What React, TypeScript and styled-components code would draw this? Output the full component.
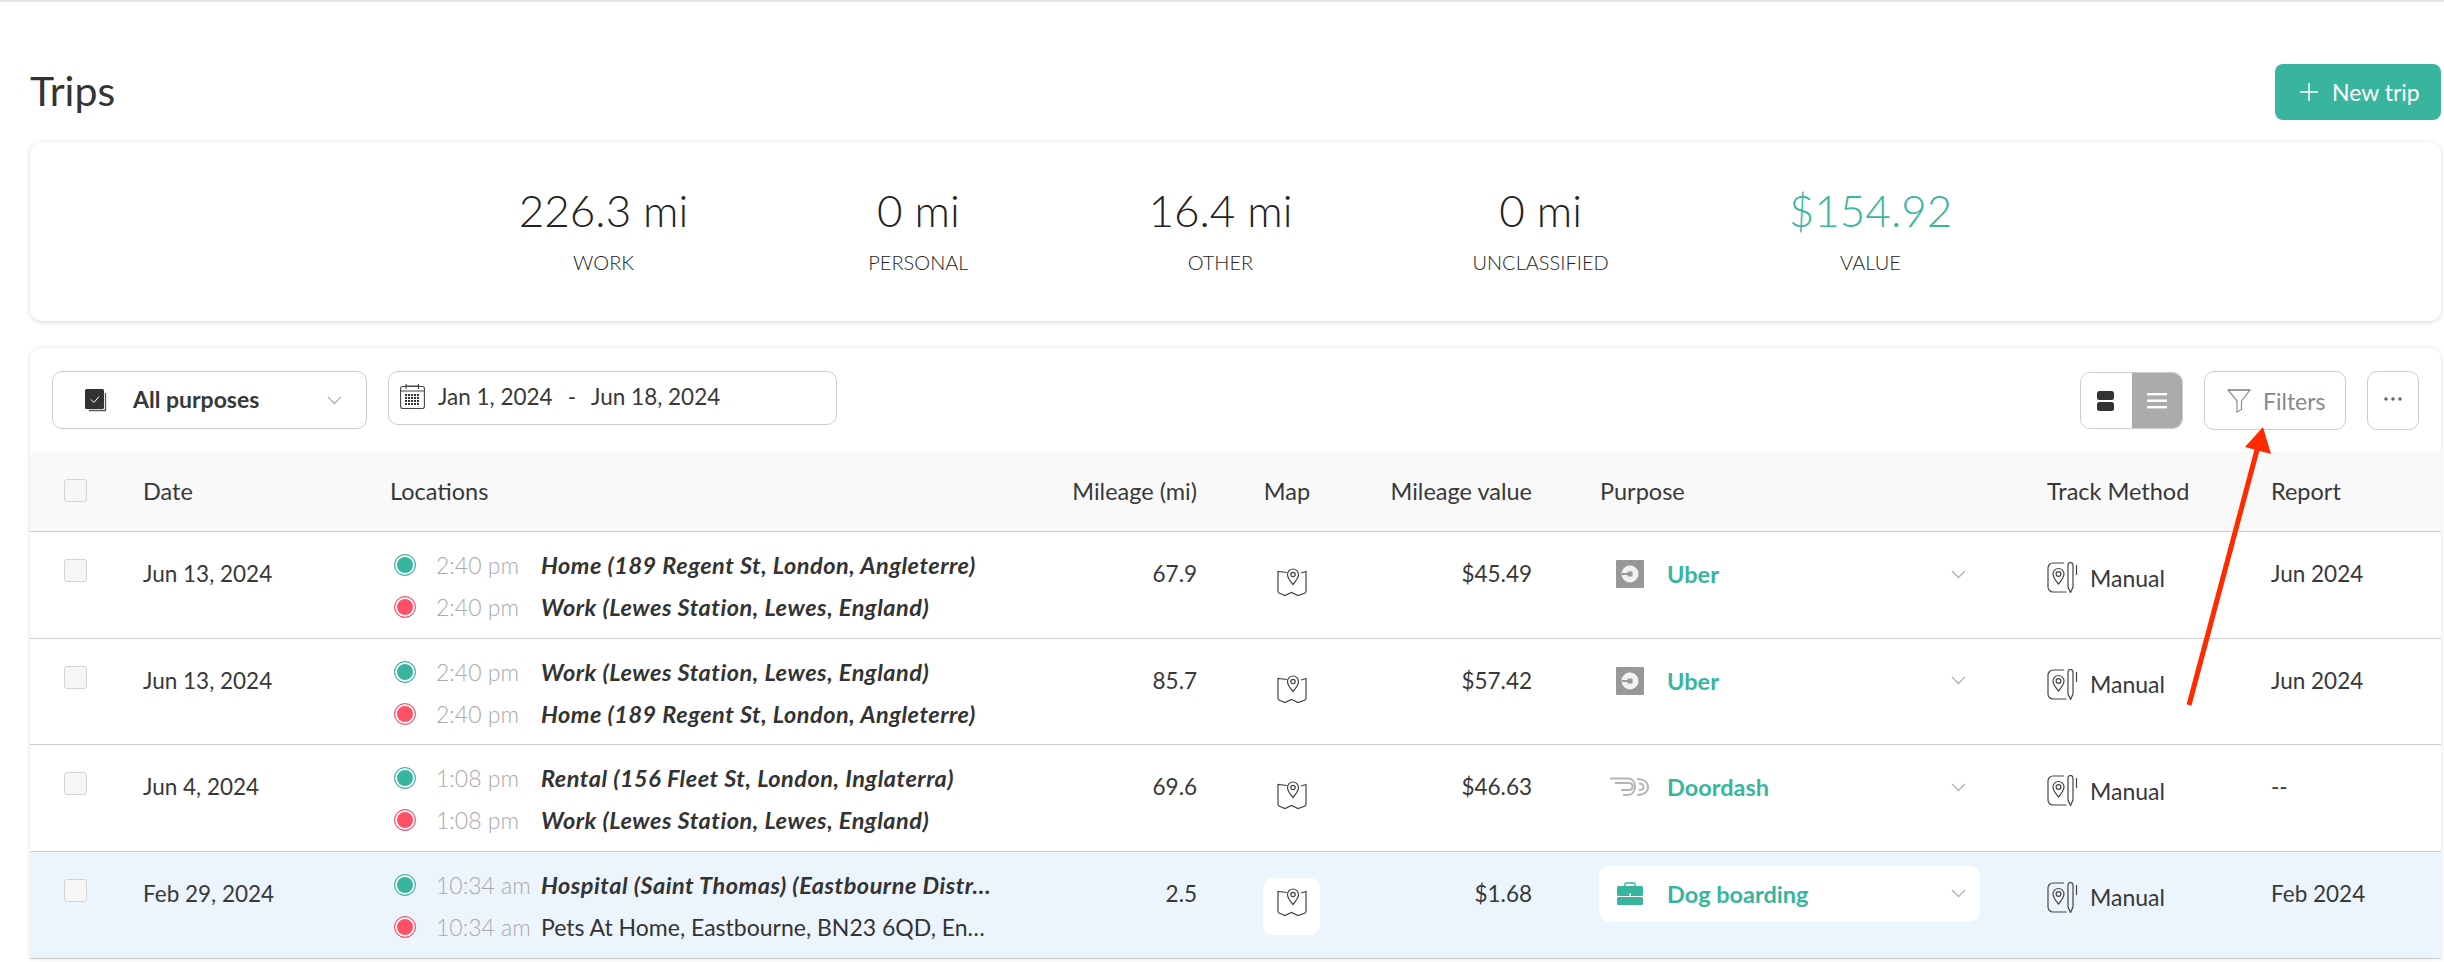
import styled, { createGlobalStyle } from "styled-components";

type PurposeKind = "uber" | "doordash" | "work";

interface Trip {
  date: string;
  time: string;
  from: string;
  to: string;
  toPlain?: boolean;
  miles: string;
  value: string;
  purpose: string;
  kind: PurposeKind;
  report: string;
  active?: boolean;
}

const HOME = "Home (189 Regent St, London, Angleterre)";
const WORK = "Work (Lewes Station, Lewes, England)";

const trips: Trip[] = [
  { date: "Jun 13, 2024", time: "2:40 pm", from: HOME, to: WORK, miles: "67.9", value: "$45.49", purpose: "Uber", kind: "uber", report: "Jun 2024" },
  { date: "Jun 13, 2024", time: "2:40 pm", from: WORK, to: HOME, miles: "85.7", value: "$57.42", purpose: "Uber", kind: "uber", report: "Jun 2024" },
  { date: "Jun 4, 2024", time: "1:08 pm", from: "Rental (156 Fleet St, London, Inglaterra)", to: WORK, miles: "69.6", value: "$46.63", purpose: "Doordash", kind: "doordash", report: "--" },
  {
    date: "Feb 29, 2024",
    time: "10:34 am",
    from: "Hospital (Saint Thomas) (Eastbourne Distr…",
    to: "Pets At Home, Eastbourne, BN23 6QD, En…",
    toPlain: true,
    miles: "2.5",
    value: "$1.68",
    purpose: "Dog boarding",
    kind: "work",
    report: "Feb 2024",
    active: true,
  },
];

const stats = [
  { value: "226.3 mi", label: "WORK" },
  { value: "0 mi", label: "PERSONAL" },
  { value: "16.4 mi", label: "OTHER" },
  { value: "0 mi", label: "UNCLASSIFIED" },
  { value: "$154.92", label: "VALUE", money: true },
];

const Chevron = () => (
  <svg width="15" height="9" viewBox="0 0 15 9" fill="none">
    <path d="M1 1l6.5 6.5L14 1" stroke="#b0b0b0" strokeWidth="1.3" />
  </svg>
);

const PurposeIcon = ({ kind }: { kind: PurposeKind }) => {
  if (kind === "uber") {
    return (
      <svg width="28" height="28" viewBox="0 0 28 28">
        <rect width="28" height="28" rx="1" fill="#979797" />
        <path d="M0 6L8 14 0 22M28 6L20 14 28 22M6 0l8 6 8-6M6 28l8-6 8 6" stroke="#a6a6a6" strokeWidth=".7" fill="none" />
        <circle cx="14" cy="14" r="8.5" fill="#f2f2f2" />
        <rect x="6" y="13" width="7" height="2" fill="#979797" />
        <rect x="11.5" y="11.5" width="5" height="5" fill="#979797" />
      </svg>
    );
  }
  if (kind === "doordash") {
    return (
      <svg width="40" height="20" viewBox="0 0 40 20" fill="none" stroke="#b4b4b4" strokeWidth="2">
        <path d="M0 1.5h18c4 0 7 3 7 8s-3 8.500-7 8.500h-5" />
        <path d="M5 6h14c2 0 3.500 1.500 3.500 3.500S21 13 19 13H11" />
        <path d="M27 2c5 0 11 2 11 8s-6 8-11 8" />
        <path d="M29 6.500c3 0 4.500 1.500 4.500 3.500s-1.500 3-4.500 3" />
      </svg>
    );
  }
  return (
    <svg width="26" height="23" viewBox="0 0 26 23">
      <path d="M8 5V2a1 1 0 0 1 1-1h8a1 1 0 0 1 1 1v3" fill="none" stroke="#39b59f" strokeWidth="1.4" />
      <rect y="4" width="26" height="10" rx="1.500" fill="#39b59f" />
      <rect y="15" width="26" height="8" rx="1.500" fill="#39b59f" />
      <rect x="12" y="11.500" width="2" height="2" fill="#fff" />
    </svg>
  );
};

const MapIcon = () => (
  <svg width="30" height="29" viewBox="0 0 30 29" fill="none" stroke="#444" strokeWidth="1.2">
    <path d="M10 4.500L1 3.500v20l1 1.500 6 2.500 6.500-3 6.500 3 7-2.500 1-1.500v-20l-5 1.500" />
    <path d="M16 16.500c-3-3.500-5.500-6.500-5.500-10a5.500 5.500 0 0 1 11 0c0 3.500-2.500 6.500-5.500 10z" fill="#fff" />
    <circle cx="16" cy="6.500" r="2.200" />
  </svg>
);

const ManualIcon = () => (
  <svg width="31" height="31" viewBox="0 0 31 31" fill="none" stroke="#444" strokeWidth="1.2">
    <path d="M17 1H6a5 5 0 0 0-5 5v19a5 5 0 0 0 5 5h13.500" />
    <path d="M11.500 22c-3-3.500-5.500-6.500-5.500-10a5.500 5.500 0 0 1 11 0c0 3.500-2.500 6.500-5.500 10z" />
    <circle cx="11.500" cy="12" r="2.400" />
    <path d="M21 3a2.500 2.500 0 0 1 5 0v22l-2.500 5.500L21 25z" />
    <path d="M29.500 3v10" />
  </svg>
);

const CalendarIcon = () => (
  <svg width="25" height="26" viewBox="0 0 25 26" fill="none" stroke="#444" strokeWidth="1.1">
    <rect x=".6" y="3.500" width="23.800" height="22" rx="2" />
    <path d="M.6 8h23.800M6 1v5M18.500 1v5M6 3h12.500" />
    <path d="M5 12h15M5 15h15M5 18h15M5 21h15" strokeWidth="2" strokeDasharray="2 1" stroke="#333" />
  </svg>
);

const FunnelIcon = () => (
  <svg width="24" height="24" viewBox="0 0 24 24" fill="none" stroke="#8a8d93" strokeWidth="1.2">
    <path d="M1 1h22l-8.500 11v8.500L10 23V12z" />
    <path d="M1 1h22" strokeWidth="1.6" />
  </svg>
);

const PurposesIcon = () => (
  <svg width="22" height="23" viewBox="0 0 22 23">
    <path d="M4 21.500h16.500V4" fill="none" stroke="#555" strokeWidth="1.300" />
    <rect width="19" height="20" rx="1.500" fill="#333" />
    <path d="M6 10.500l3 3 5-6" fill="none" stroke="#fff" strokeWidth="1" />
  </svg>
);

export default function App() {
  return (
    <>
      <GlobalStyle />
      <TopLine />
      <Page>
        <Header>
          <Title>Trips</Title>
          <NewTrip>
            <svg width="18" height="18" viewBox="0 0 18 18">
              <path d="M9 0v18M0 9h18" stroke="#fff" strokeWidth="1.4" />
            </svg>
            New trip
          </NewTrip>
        </Header>

        <StatsCard>
          {stats.map((stat) => (
            <Stat key={stat.label}>
              <StatValue $money={stat.money}>{stat.value}</StatValue>
              <StatLabel>{stat.label}</StatLabel>
            </Stat>
          ))}
        </StatsCard>

        <TableCard>
          <Toolbar>
            <PurposeFilter>
              <PurposesIcon />
              <strong>All purposes</strong>
              <Chevron />
            </PurposeFilter>
            <DateFilter>
              <CalendarIcon />
              <span>Jan 1, 2024</span>
              <DateDash>-</DateDash>
              <span>Jun 18, 2024</span>
            </DateFilter>
            <ToolbarRight>
              <ViewToggle>
                <ViewOption>
                  <svg width="26" height="26" viewBox="0 0 26 26" fill="#333">
                    <rect x="4" y="3" width="17" height="9" rx="2.500" />
                    <rect x="4" y="14" width="17" height="9" rx="2.500" />
                  </svg>
                </ViewOption>
                <ViewOption $selected>
                  <svg width="20" height="16" viewBox="0 0 20 16" fill="#fff">
                    <rect width="20" height="2.400" />
                    <rect y="6.500" width="20" height="2.400" />
                    <rect y="13" width="20" height="2.400" />
                  </svg>
                </ViewOption>
              </ViewToggle>
              <FiltersButton>
                <FunnelIcon />
                Filters
              </FiltersButton>
              <MoreButton>
                <svg width="18" height="4" viewBox="0 0 18 4" fill="#666">
                  <circle cx="2" cy="2" r="1.800" />
                  <circle cx="9" cy="2" r="1.800" />
                  <circle cx="16" cy="2" r="1.800" />
                </svg>
              </MoreButton>
            </ToolbarRight>
          </Toolbar>

          <HeadRow>
            <HeadCheck>
              <Checkbox />
            </HeadCheck>
            <span>Date</span>
            <span>Locations</span>
            <RightText>Mileage (mi)</RightText>
            <MapHead>Map</MapHead>
            <RightText>Mileage value</RightText>
            <PurposeHead>Purpose</PurposeHead>
            <span>Track Method</span>
            <span>Report</span>
          </HeadRow>

          {trips.map((trip, i) => (
            <Row key={i} $active={trip.active}>
              <CheckCell>
                <Checkbox />
              </CheckCell>
              <TextCell>{trip.date}</TextCell>
              <Locations>
                <Stop>
                  <Dot $color="#39b59f" />
                  <Time>{trip.time}</Time>
                  <Place>{trip.from}</Place>
                </Stop>
                <Stop>
                  <Dot $color="#ff5068" />
                  <Time>{trip.time}</Time>
                  <Place $plain={trip.toPlain}>{trip.to}</Place>
                </Stop>
              </Locations>
              <RightCell>{trip.miles}</RightCell>
              <MapCell>
                <MapButton $active={trip.active}>
                  <MapIcon />
                </MapButton>
              </MapCell>
              <RightCell>{trip.value}</RightCell>
              <PurposeCell>
                <PurposeSelect $active={trip.active}>
                  <PurposeGlyph>
                    <PurposeIcon kind={trip.kind} />
                  </PurposeGlyph>
                  <PurposeName>{trip.purpose}</PurposeName>
                  <Chevron />
                </PurposeSelect>
              </PurposeCell>
              <TrackCell>
                <ManualIcon />
                Manual
              </TrackCell>
              <TextCell>{trip.report}</TextCell>
            </Row>
          ))}
        </TableCard>

        <Arrow width="100" height="290" viewBox="0 0 100 290">
          <path d="M86 10L14 280" stroke="#ff2a00" strokeWidth="5" />
          <path d="M88 2L70 22 96 29z" fill="#ff2a00" />
        </Arrow>
      </Page>
    </>
  );
}

const GlobalStyle = createGlobalStyle`
  html, body {
    margin: 0;
    height: 100%;
    overflow: hidden;
    background: #fff;
  }
  body {
    font-family: Lato, "Open Sans", sans-serif;
    color: #383838;
    font-size: 22.5px;
  }
  * {
    box-sizing: border-box;
  }
`;

const TopLine = styled.div`
  height: 2px;
  background: #e4e4e0;
`;
const Page = styled.div`
  position: relative;
  padding: 62px 3px 0 30px;
`;
const Header = styled.div`
  display: flex;
  justify-content: space-between;
  align-items: center;
  height: 56px;
  margin-bottom: 22px;
`;
const Title = styled.h1`
  margin: 0;
  padding-bottom: 4px;
  font-size: 41px;
  font-weight: 400;
  color: #333;
`;
const NewTrip = styled.button`
  display: flex;
  align-items: center;
  column-gap: 14px;
  height: 56px;
  width: 166px;
  padding: 0 0 0 25px;
  border: none;
  border-radius: 8px;
  background: #39b59f;
  color: #fff;
  font: 400 23px Lato, sans-serif;
`;
const StatsCard = styled.section`
  display: flex;
  justify-content: center;
  column-gap: 180px;
  height: 179px;
  padding-top: 43px;
  margin-bottom: 27px;
  border-radius: 12px;
  background: #fff;
  box-shadow: 0 1px 5px rgba(0, 0, 0, 0.16);
`;
const Stat = styled.div`
  display: flex;
  flex-direction: column;
  align-items: center;
  row-gap: 14px;
`;
const StatValue = styled.div<{ $money?: boolean }>`
  font-size: 44px;
  line-height: 50px;
  font-weight: 300;
  white-space: nowrap;
  color: ${(p) => (p.$money ? "#39b59f" : "#222")};
`;
const StatLabel = styled.div`
  font-size: 20px;
  line-height: 26px;
  font-weight: 300;
  color: #222;
`;
const TableCard = styled.section`
  border-radius: 12px 12px 0 0;
  background: #fff;
  box-shadow: 0 0 5px rgba(0, 0, 0, 0.12);
  overflow: hidden;
`;
const Toolbar = styled.div`
  display: flex;
  align-items: flex-start;
  column-gap: 21px;
  height: 104px;
  padding: 23px 22px 0;
`;
const PurposeFilter = styled.div`
  display: flex;
  align-items: center;
  width: 315px;
  height: 58px;
  padding: 0 24px 0 32px;
  border: 1px solid #ccc;
  border-radius: 10px;
  strong {
    flex: 1;
    margin: -3px 0 0 26px;
    font-weight: 700;
    font-size: 23px;
  }
`;
const DateFilter = styled.div`
  display: flex;
  align-items: center;
  width: 449px;
  height: 54px;
  padding: 0 0 4px 11px;
  border: 1px solid #ccc;
  border-radius: 10px;
  font-size: 22.5px;
  svg {
    margin-right: 13px;
  }
`;
const DateDash = styled.span`
  margin: 0 15px;
`;
const ToolbarRight = styled.div`
  display: flex;
  align-items: flex-start;
  column-gap: 21px;
  margin-left: auto;
`;
const ViewToggle = styled.div`
  display: flex;
  width: 103px;
  height: 57px;
  margin-top: 1px;
  border: 1px solid #ccc;
  border-radius: 10px;
  overflow: hidden;
`;
const ViewOption = styled.div<{ $selected?: boolean }>`
  flex: 1;
  display: flex;
  align-items: center;
  justify-content: center;
  background: ${(p) => (p.$selected ? "#aaabad" : "#fff")};
`;
const FiltersButton = styled.button`
  display: flex;
  align-items: center;
  column-gap: 12px;
  width: 142px;
  height: 59px;
  padding: 0 0 0 22px;
  border: 1px solid #ccc;
  border-radius: 10px;
  background: #fff;
  color: #85888e;
  font: 400 23px Lato, sans-serif;
`;
const MoreButton = styled.button`
  display: flex;
  align-items: center;
  justify-content: center;
  width: 52px;
  height: 59px;
  padding: 0 0 4px;
  border: 1px solid #ccc;
  border-radius: 10px;
  background: #fff;
`;

// shared by head and rows
const COLUMNS = "113px 247px 610px 197px 189px 146px 515px 224px 1fr";

const HeadRow = styled.div`
  display: grid;
  grid-template-columns: ${COLUMNS};
  align-items: center;
  height: 79px;
  padding-bottom: 2px;
  background: #f9f9f9;
  font-size: 23.5px;
  line-height: 28px;
`;
const HeadCheck = styled.div`
  padding-left: 34px;
`;
const RightText = styled.span`
  text-align: right;
  white-space: nowrap;
`;
const MapHead = styled.span`
  padding-right: 9px;
  text-align: center;
`;
const PurposeHead = styled.span`
  padding-left: 68px;
`;
const Row = styled.div<{ $active?: boolean }>`
  display: grid;
  grid-template-columns: ${COLUMNS};
  align-items: start;
  height: 106.5px;
  border-top: 1.5px solid #cdcdcd;
  background: ${(p) => (p.$active ? "#ecf4fe" : "#fff")};
  &:last-child {
    border-bottom: 1.5px solid #cdcdcd;
    height: 108px;
  }
`;
const Checkbox = styled.div`
  width: 23px;
  height: 23px;
  border: 1px solid #d4d4d4;
  border-radius: 3px;
  background: #f6f6f6;
`;
const CheckCell = styled.div`
  padding: 27px 0 0 34px;
`;
const TextCell = styled.div`
  padding-top: 28px;
  line-height: 28px;
`;
const RightCell = styled(TextCell)`
  text-align: right;
`;
const Locations = styled.div`
  display: flex;
  flex-direction: column;
  row-gap: 14px;
  padding-top: 19px;
`;
const Stop = styled.div`
  display: flex;
  align-items: center;
  height: 28px;
  padding-left: 4px;
`;
const Dot = styled.span<{ $color: string }>`
  flex: none;
  width: 22px;
  height: 22px;
  margin-right: 20px;
  border-radius: 50%;
  border: 1px solid ${(p) => p.$color};
  background: ${(p) => p.$color};
  box-shadow: inset 0 0 0 2px #fff;
`;
const Time = styled.span`
  flex: none;
  width: 105px;
  color: #aaa;
  font-size: 23px;
  font-weight: 300;
`;
const Place = styled.span<{ $plain?: boolean }>`
  white-space: nowrap;
  font-size: ${(p) => (p.$plain ? 23 : 23.5)}px;
  letter-spacing: ${(p) => (p.$plain ? 0 : 0.5)}px;
  font-weight: ${(p) => (p.$plain ? 400 : 700)};
  font-style: ${(p) => (p.$plain ? "normal" : "italic")};
  color: #333;
`;
const MapCell = styled.div`
  display: flex;
  justify-content: center;
  padding-top: 26px;
`;
const MapButton = styled.div<{ $active?: boolean }>`
  display: flex;
  justify-content: center;
  width: 57px;
  height: 57px;
  padding-top: 10px;
  border-radius: 10px;
  background: ${(p) => (p.$active ? "#fff" : "transparent")};
`;
const PurposeCell = styled.div`
  padding: 14px 67px 0;
`;
const PurposeSelect = styled.div<{ $active?: boolean }>`
  display: flex;
  align-items: center;
  height: 56px;
  padding: 0 14px 0 0;
  border-radius: 10px;
  background: ${(p) => (p.$active ? "#fff" : "transparent")};
`;
const PurposeGlyph = styled.span`
  flex: none;
  display: flex;
  justify-content: center;
  width: 68px;
  padding-right: 6px;
`;
const PurposeName = styled.span`
  flex: 1;
  color: #39b59f;
  font-size: 23.5px;
  font-weight: 700;
`;
const TrackCell = styled.div`
  display: flex;
  align-items: center;
  column-gap: 12px;
  padding-top: 30px;
  font-size: 23px;
`;
const Arrow = styled.svg`
  position: absolute;
  left: 2175px;
  top: 423px;
`;
